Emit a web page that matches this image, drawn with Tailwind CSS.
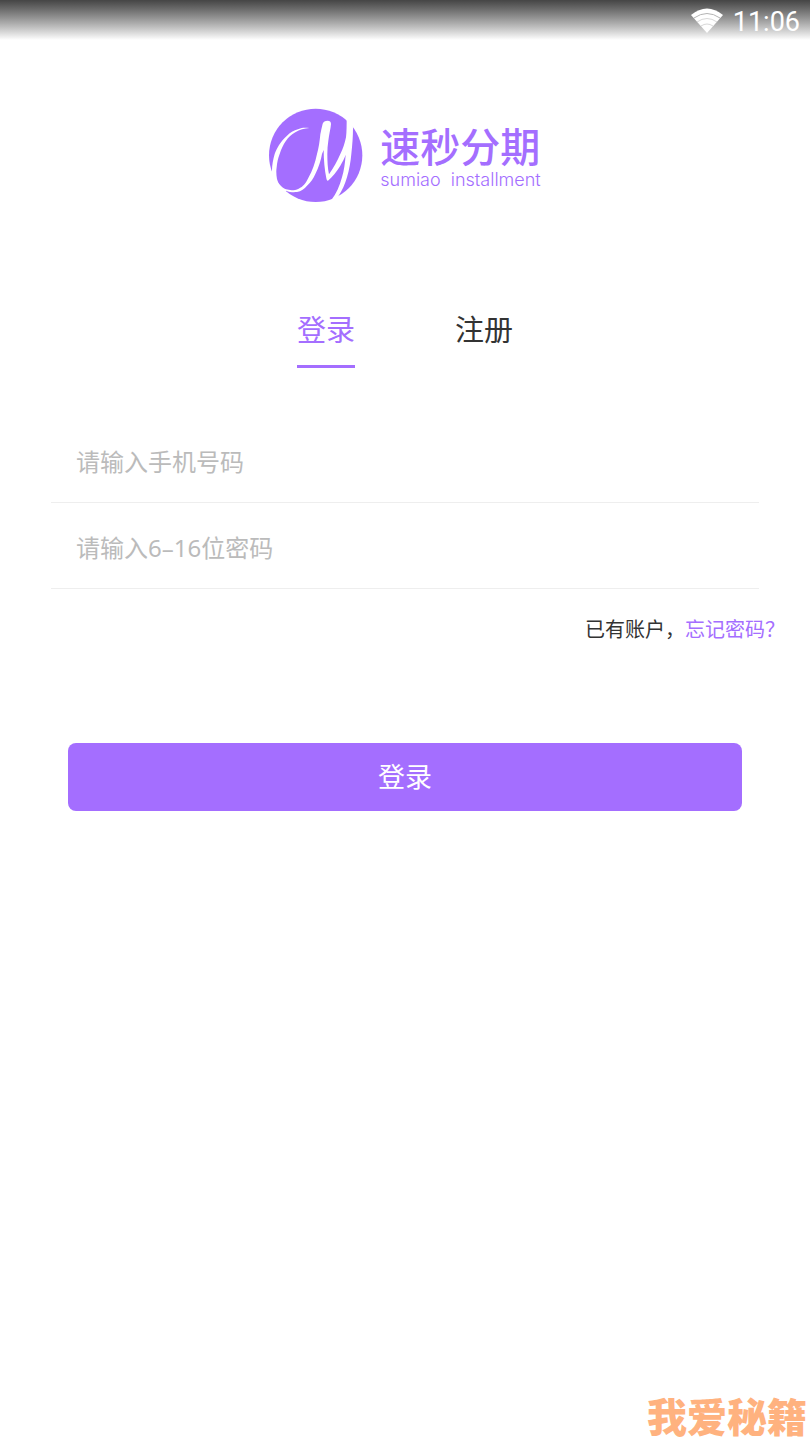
<!DOCTYPE html>
<html lang="zh-CN">
<head>
    <meta charset="UTF-8">
    <meta name="viewport" content="width=device-width, initial-scale=1.0">
    <title>登录 | 速秒分期</title>
    <script src="https://cdn.jsdelivr.net/npm/@tailwindcss/browser@4"></script>
</head>
<body class="bg-white text-[#333333] font-['Noto_Sans','Noto_Sans_CJK_SC',sans-serif]">
    <div class="min-h-screen flex flex-col">
        <!-- 状态栏 -->
        <div class="h-10 pt-1 pr-[10px] flex items-center justify-end gap-2 bg-linear-to-b from-[#454545] to-white text-white">
            <svg class="w-9 h-7" viewBox="0 0 36 28" fill="none">
                <path d="M18 25L2 7Q18 -6 34 7Z" fill="#fff"/>
                <path d="M5 10Q18 1 31 10" stroke="#b4b4b4"/>
                <path d="M8 14Q18 7 28 14M12 18Q18 14 24 18" stroke="#d8d8d8"/>
            </svg>
            <span class="text-[27px] leading-9 font-['Roboto',sans-serif]">11:06</span>
        </div>

        <header class="pt-[68px] flex justify-center gap-[17px]">
            <svg class="w-[94px] h-[96px]" viewBox="29 24 282 288" role="img" aria-label="速秒分期">
                <circle cx="169" cy="166" r="140" fill="#a46eff"/>
                <g fill="#fff">
                    <path d="M150 84C136 82 127 83 118 87C102 92 92 98 83 107C63 125 52 145 46 162C41 180 38 195 38 212L20 240L70 290L80 272C92 277 103 277 113 276C126 273 135 267 143 257C155 246 162 236 168 222C178 203 185 180 188 162L193 150C193 180 196 210 201 235C202 241 204 243 206 242C220 229 232 215 243 197C250 185 255 175 259 164C257 190 254 212 248 232C241 258 231 282 216 300L226 306L236 290C249 272 257 252 263 232C270 208 274 185 276 162C279 135 281 110 281 85L280 60L262 50C262 75 262 95 260 112C256 130 251 147 243 162C234 182 222 205 209 223C205 205 204 182 204 162C204 148 205 135 207 122C209 105 214 85 215 72C215 65 211 62 205 62C197 62 192 65 190 71C187 83 185 93 183 103C181 125 178 145 173 162C167 190 159 213 148 232C140 249 131 261 118 266C105 272 91 271 80 268C65 262 56 250 53 237C51 225 50 213 52 202C53 188 56 175 61 162C71 132 85 110 108 97C121 88 135 86 150 84Z"/>
                </g>
            </svg>
            <div class="pt-4 text-[#a46eff]">
                <h1 class="text-[40px] leading-[46px] font-medium">速秒分期</h1>
                <p class="text-lg leading-5 font-light font-['Inter',sans-serif]">sumiao&nbsp; installment</p>
            </div>
        </header>

        <nav class="mt-[104px] flex justify-center gap-[100px] text-[29px] leading-[44px]">
            <a href="#login" class="pb-[13px] border-b-3 border-[#a46eff] text-[#a46eff]">登录</a>
            <a href="#register" class="pb-[13px] border-b-3 border-transparent">注册</a>
        </nav>

        <form id="login">
            <div class="mt-[49px] mx-[51px]">
                <input type="tel" aria-label="手机号码" placeholder="请输入手机号码" class="block w-full h-[86px] px-[25px] pt-1 border-b border-[#eeeeee] text-2xl placeholder:text-[#bbbbbb] outline-none">
                <input type="password" aria-label="密码" placeholder="请输入6–16位密码" class="block w-full h-[86px] px-[25px] pt-1 border-b border-[#eeeeee] text-2xl placeholder:text-[#bbbbbb] outline-none">
            </div>
            <p class="mt-6 mr-[25px] text-right text-xl leading-[34px]">已有账户，<a href="#forgot" class="text-[#a46eff]">忘记密码？</a></p>
            <div class="mt-24 mx-[68px]">
                <button type="submit" class="block w-full h-[68px] rounded-lg bg-[#a46eff] text-white text-[27px]">登录</button>
            </div>
        </form>

        <footer class="mt-auto pr-[3px] text-right text-[40px] leading-[46px] font-black text-[#ffb27f]">我爱秘籍</footer>
    </div>
</body>
</html>
